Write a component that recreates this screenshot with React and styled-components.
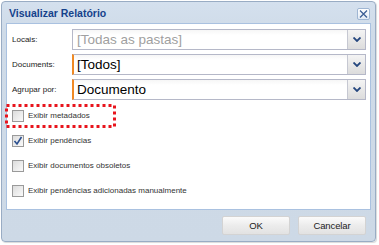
import React from "react";
import styled, { createGlobalStyle } from "styled-components";

const Global = createGlobalStyle`
  html, body { margin: 0; padding: 0; background: #ffffff; }
  body { width: 379px; height: 245px; overflow: hidden; font-family: "Liberation Sans", Arial, sans-serif; }
`;

const Frame = styled.div`
  position: relative;
  margin: 1px 0 0 1px;
  width: 375px;
  height: 241px;
  box-sizing: border-box;
  border: 1px solid #99acc4;
  border-radius: 4px;
  background: linear-gradient(#d4e0ee, #cfdbe8 30px, #cdd9e6);
  display: flex;
  flex-direction: column;
  box-shadow: 1px 1px 1px rgba(0,0,0,0.15);
`;

const TitleBar = styled.div`
  height: 21px;
  display: flex;
  align-items: center;
  justify-content: space-between;
  padding: 0 5px 0 7px;
`;

const Title = styled.span`
  font-weight: bold;
  font-size: 10.5px;
  color: #15428b;
  padding-top: 1px;
`;

const CloseBtn = styled.div`
  width: 13px;
  height: 12px;
  box-sizing: border-box;
  border: 1px solid #9fb6d3;
  border-radius: 2px;
  background: linear-gradient(#ffffff, #e3ebf5);
  display: flex;
  align-items: center;
  justify-content: center;
  margin-top: 2px;
`;

const Body = styled.div`
  position: relative;
  margin: 0 4px;
  height: 187px;
  box-sizing: border-box;
  border: 1px solid #a9c1e0;
  background: #ffffff;
  padding: 5px 4px 0 5px;
`;

const Fields = styled.div`
  display: flex;
  flex-direction: column;
  gap: 4px;
`;

const FieldRow = styled.div`
  display: flex;
  align-items: center;
  height: 21px;
`;

const Label = styled.label`
  width: 60px;
  font-size: 8px;
  color: #222;
`;

const Combo = styled.div`
  flex: 1;
  height: 21px;
  box-sizing: border-box;
  display: flex;
  border: 1px solid #b5b8c8;
  border-left: ${(p) => (p.$required ? "2px solid #f08a24" : "1px solid #b5b8c8")};
  background: linear-gradient(#f6f6f6, #ffffff 5px);
`;

const ComboText = styled.div`
  flex: 1;
  font-size: 13.5px;
  line-height: 19px;
  padding-left: ${(p) => (p.$required ? "3px" : "4px")};
  color: ${(p) => (p.$placeholder ? "#a0a0a0" : "#000")};
  white-space: nowrap;
  overflow: hidden;
`;

const Trigger = styled.div`
  width: 17px;
  border-left: 1px solid #c6c8d2;
  background: linear-gradient(#f4f4f4, #dcdcdc);
  display: flex;
  align-items: center;
  justify-content: center;
`;

const Checks = styled.div`
  margin-top: 3px;
  display: flex;
  flex-direction: column;
`;

const CheckRow = styled.div`
  height: 25px;
  display: flex;
  align-items: center;
  gap: 4px;
`;

const Box = styled.div`
  width: 12px;
  height: 12px;
  box-sizing: border-box;
  border: 1px solid #9a9a9a;
  background: linear-gradient(135deg, #dcdcdc, #fafafa);
  display: flex;
  align-items: center;
  justify-content: center;
`;

const CheckLabel = styled.span`
  font-size: 8px;
  color: #333;
`;

const Highlight = styled.div`
  position: absolute;
  left: -2px;
  top: 80px;
  width: 111px;
  height: 24px;
  pointer-events: none;
`;

const Footer = styled.div`
  flex: 1;
  display: flex;
  justify-content: flex-end;
  align-items: flex-start;
  gap: 8px;
  padding: 6px 9px 0 0;
`;

const Button = styled.button`
  width: 68px;
  height: 19px;
  box-sizing: border-box;
  border: 1px solid #d3d3d3;
  border-radius: 2px;
  background: linear-gradient(#fbfbfb, #ececec 50%, #e2e2e2);
  font-family: "Liberation Sans", Arial, sans-serif;
  font-size: 9.5px;
  color: #222;
  padding: 0;
  letter-spacing: -0.1px;
`;

const Arrow = () => (
  <svg width="8" height="5" viewBox="0 0 8 5">
    <path d="M0.5 0.5 L4 4 L7.5 0.5" fill="none" stroke="#24467e" strokeWidth="1.8" />
  </svg>
);

const fields = [
  { label: "Locais:", value: "[Todas as pastas]", placeholder: true },
  { label: "Documents:", value: "[Todos]", required: true },
  { label: "Agrupar por:", value: "Documento", required: true },
];

const checks = [
  { label: "Exibir metadados", checked: false },
  { label: "Exibir pendências", checked: true },
  { label: "Exibir documentos obsoletos", checked: false },
  { label: "Exibir pendências adicionadas manualmente", checked: false },
];

export default function App() {
  return (
    <>
      <Global />
      <Frame>
        <TitleBar>
          <Title>Visualizar Relatório</Title>
          <CloseBtn>
            <svg width="9" height="8" viewBox="0 0 9 8">
              <path d="M1 0.5 L8 7.5 M8 0.5 L1 7.5" stroke="#3d5f95" strokeWidth="1.3" />
            </svg>
          </CloseBtn>
        </TitleBar>
        <Body>
          <Fields>
            {fields.map((f) => (
              <FieldRow key={f.label}>
                <Label>{f.label}</Label>
                <Combo $required={f.required}>
                  <ComboText $required={f.required} $placeholder={f.placeholder}>{f.value}</ComboText>
                  <Trigger><Arrow /></Trigger>
                </Combo>
              </FieldRow>
            ))}
          </Fields>
          <Checks>
            {checks.map((c) => (
              <CheckRow key={c.label}>
                <Box>
                  {c.checked && (
                    <svg width="10" height="10" viewBox="0 0 10 10">
                      <path d="M1.5 5 L4 8 L8.5 1" fill="none" stroke="#2b4f8f" strokeWidth="1.6" />
                    </svg>
                  )}
                </Box>
                <CheckLabel>{c.label}</CheckLabel>
              </CheckRow>
            ))}
          </Checks>
          <Highlight>
            <svg width="111" height="24" viewBox="0 0 111 24">
              <rect x="1.5" y="1.5" width="108" height="21" fill="none" stroke="#e8141c" strokeWidth="3" strokeDasharray="3 3" />
            </svg>
          </Highlight>
        </Body>
        <Footer>
          <Button>OK</Button>
          <Button>Cancelar</Button>
        </Footer>
      </Frame>
    </>
  );
}
